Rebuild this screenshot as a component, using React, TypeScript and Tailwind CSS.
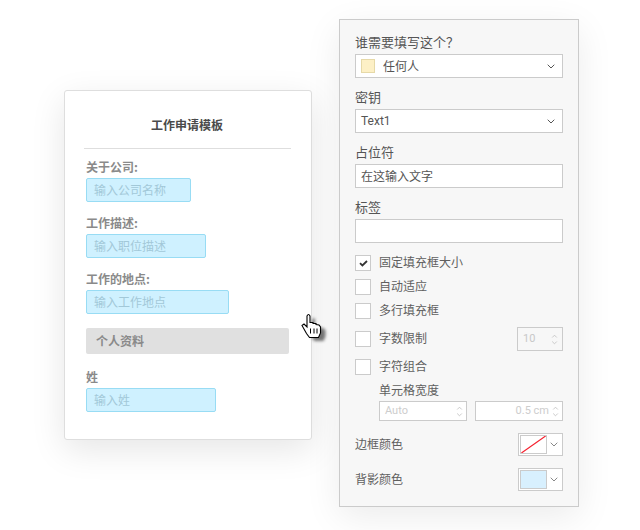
const font = { fontFamily: '"Noto Sans CJK SC", "Liberation Sans", sans-serif' };
const latin = { fontFamily: 'Roboto, "Liberation Sans", sans-serif' };

function Chevron({ color = "#555", size = 8 }: { color?: string; size?: number }) {
  return (
    <svg width={size} height="5" viewBox="0 0 8 5" fill="none" className="shrink-0">
      <path d="M0.7 0.7L4 4L7.3 0.7" stroke={color} strokeWidth="1" />
    </svg>
  );
}

function Spinner() {
  return (
    <svg width="7" height="13" viewBox="0 0 7 13" fill="none" className="shrink-0">
      <path d="M1.2 4.5L3.5 2.2L5.8 4.5M1.2 8.5L3.5 10.8L5.8 8.5" stroke="#c4c4c4" strokeWidth="0.9" />
    </svg>
  );
}

function FormField({ label, placeholder, width, top }: { label: string; placeholder: string; width: string; top: string }) {
  return (
    <div className={top}>
      <div className="h-5 leading-5 text-[12px] font-bold text-[#8a8a8a]">{label}</div>
      <div className={`${width} h-6 mt-px flex items-center pl-[7px] bg-[#cff1ff] border border-[#98dcf4] rounded-[2px] text-[12px] text-[#a2c8d8]`}>
        {placeholder}
      </div>
    </div>
  );
}

function PanelLabel({ children, className = "" }: { children: string; className?: string }) {
  return <div className={`h-5 leading-[19px] text-[13px] text-[#555] ${className}`}>{children}</div>;
}

function Box({ children, className = "" }: { children?: React.ReactNode; className?: string }) {
  return (
    <div className={`h-6 flex items-center bg-white border border-[#cbcbcb] text-[12px] text-[#555] ${className}`}>
      {children}
    </div>
  );
}

function Check({ label, checked = false, className = "" }: { label: string; checked?: boolean; className?: string }) {
  return (
    <div className={`h-4 flex items-center gap-2 ${className}`}>
      <div className="w-4 h-4 flex items-center justify-center bg-white border border-[#cbcbcb]">
        {checked && (
          <svg width="9" height="7" viewBox="0 0 9 7" fill="none">
            <path d="M1 3.2L3.4 5.5L8 1" stroke="#333" strokeWidth="1.8" />
          </svg>
        )}
      </div>
      <span className="pb-[2px] text-[12px] text-[#5f5f5f]">{label}</span>
    </div>
  );
}

function ColorRow({ label, swatch, className = "" }: { label: string; swatch: React.ReactNode; className?: string }) {
  return (
    <div className={`flex items-center justify-between ${className}`}>
      <span className="pb-[2px] text-[12px] text-[#5f5f5f]">{label}</span>
      <div className="w-[45px] h-[23px] flex items-center pl-px pr-[4px] justify-between border border-[#cbcbcb] bg-white">
        {swatch}
        <Chevron color="#888" />
      </div>
    </div>
  );
}

function Hand() {
  return (
    <svg width="30" height="32" viewBox="0 0 30 32" className="absolute left-[301px] top-[313px]">
      <defs>
        <filter id="blur" x="-30%" y="-30%" width="160%" height="160%">
          <feGaussianBlur stdDeviation="1.8" />
        </filter>
      </defs>
      <path
        d="M1 12.5L3 11L6 14V3Q7.5 0 9 3V9.5L12 9.5V10.5L15 10.5V11.5L18 12L19.5 14V20L17.5 24.5H8.5L5.5 20.5Z"
        fill="#555"
        opacity="0.8"
        filter="url(#blur)"
        transform="translate(5 3.5)"
      />
      <path
        d="M1 12.5L3 11L6 14V3Q7.5 0 9 3V9.5L12 9.5V10.5L15 10.5V11.5L18 12L19.5 14V20L17.5 24.5H8.5L5.5 20.5Z"
        fill="#fff"
        stroke="#000"
        strokeWidth="1.1"
      />
      <path d="M9.5 15.5V20.5M13 15.5V20.5M16 15.5V20.5" stroke="#000" strokeWidth="1" />
    </svg>
  );
}

export default function App() {
  return (
    <div className="relative w-[640px] h-[530px] overflow-hidden bg-white flex items-start" style={font}>
      <section className="ml-16 mt-[90px] w-[248px] h-[350px] shrink-0 bg-white border border-[#dedede] rounded-[3px] shadow-[0_10px_34px_rgba(0,0,0,0.10)] pt-[24px] pl-[21px] pr-[20px]">
        <h1 className="h-5 pr-[3px] leading-5 text-center text-[12px] font-bold text-[#4a4a4a]">工作申请模板</h1>
        <div className="mt-[13px] -ml-[2px] border-t border-[#dedede]" />
        <FormField top="mt-2" label="关于公司:" placeholder="输入公司名称" width="w-[105px]" />
        <FormField top="mt-[11px]" label="工作描述:" placeholder="输入职位描述" width="w-[120px]" />
        <FormField top="mt-[11px]" label="工作的地点:" placeholder="输入工作地点" width="w-[143px]" />
        <div className="mt-[14px] h-[26px] w-[203px] flex items-center pl-[10px] bg-[#e0e0e0] rounded-[2px] text-[12px] font-bold text-[#8a8a8a]">
          个人资料
        </div>
        <FormField top="mt-[13px]" label="姓" placeholder="输入姓" width="w-[130px]" />
      </section>

      <aside className="ml-[27px] mt-[19px] w-[240px] shrink-0 bg-[#f7f7f7] border border-[#cbcbcb] shadow-[0_10px_34px_rgba(0,0,0,0.08)] pt-3 px-[15px] pb-[15px]">
        <PanelLabel>谁需要填写这个？</PanelLabel>
        <Box className="mt-[2px] pl-[5px] pr-[7px]">
          <div className="w-[14px] h-[14px] bg-[#fdf0c6] border border-[#e6d9a8]" />
          <span className="ml-[8px] flex-1">任何人</span>
          <Chevron />
        </Box>
        <PanelLabel className="mt-[9px]">密钥</PanelLabel>
        <Box className="mt-[2px] pl-[5px] pr-[7px] justify-between">
          <span style={latin}>Text1</span>
          <Chevron />
        </Box>
        <PanelLabel className="mt-[9px]">占位符</PanelLabel>
        <Box className="mt-[2px] pl-[5px]">在这输入文字</Box>
        <PanelLabel className="mt-[9px]">标签</PanelLabel>
        <Box className="mt-[2px]" />

        <Check label="固定填充框大小" checked className="mt-3" />
        <Check label="自动适应" className="mt-2" />
        <Check label="多行填充框" className="mt-2" />
        <div className="mt-2 h-6 flex items-center justify-between">
          <Check label="字数限制" />
          <div className="w-[46px] h-6 flex items-center justify-between pl-[5px] pr-[4px] border border-[#cbcbcb] text-[11px] text-[#c8c8c8]" style={latin}>
            10
            <Spinner />
          </div>
        </div>
        <Check label="字符组合" className="mt-2" />
        <div className="ml-6">
          <div className="mt-[5px] h-5 leading-5 text-[12px] text-[#5f5f5f]">单元格宽度</div>
          <div className="mt-px flex gap-2 text-[11px] text-[#cdcdcd]" style={latin}>
            <div className="w-[88px] h-5 flex items-center justify-between pl-[5px] pr-[3px] bg-white border border-[#cbcbcb]">
              Auto
              <Spinner />
            </div>
            <div className="w-[88px] h-5 flex items-center justify-end gap-[3px] pr-[3px] bg-white border border-[#cbcbcb]">
              0.5 cm
              <Spinner />
            </div>
          </div>
        </div>
        <ColorRow
          className="mt-3"
          label="边框颜色"
          swatch={
            <svg width="27" height="19" viewBox="0 0 27 19" className="border border-[#cbcbcb] bg-white">
              <path d="M0 19L27 0" stroke="#f5202e" strokeWidth="1.3" />
            </svg>
          }
        />
        <ColorRow
          className="mt-3"
          label="背影颜色"
          swatch={<div className="w-[27px] h-[19px] bg-[#d8f0fe] border border-[#cbcbcb]" />}
        />
      </aside>
      <Hand />
    </div>
  );
}
